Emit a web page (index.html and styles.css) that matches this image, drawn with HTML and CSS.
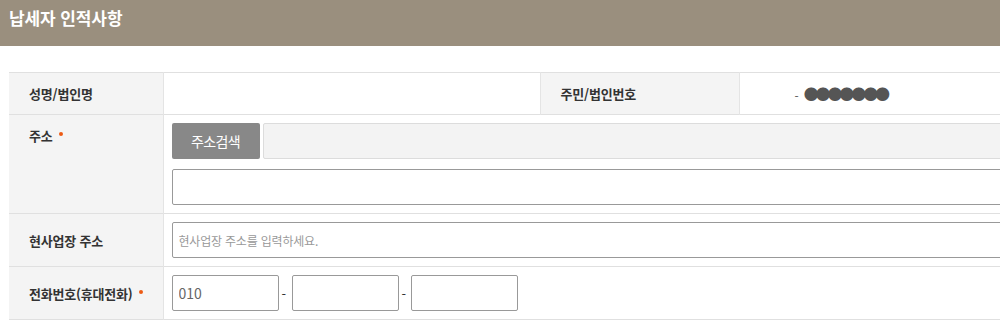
FILE: index.html
```html
<!DOCTYPE html>
<html lang="ko">
<head>
<meta charset="utf-8">
<title>납세자 인적사항</title>
<link rel="stylesheet" href="styles.css">
</head>
<body>
<header class="page-head">
  <h1 class="page-title">납세자 인적사항</h1>
</header>
<section class="form-wrap">
  <table class="info-table">
    <colgroup>
      <col class="c-label">
      <col class="c-value">
      <col class="c-label2">
      <col class="c-value2">
    </colgroup>
    <tbody>
      <tr>
        <th class="lbl">성명/법인명</th>
        <td class="val"></td>
        <th class="lbl lbl-mid">주민/법인번호</th>
        <td class="val rrn"><span class="dash">-</span><span class="mask">●●●●●●●</span></td>
      </tr>
      <tr>
        <th class="lbl lbl-top">주소<span class="req"></span></th>
        <td class="val" colspan="3">
          <div class="addr-line">
            <button class="btn-search" type="button">주소검색</button>
            <input class="inp inp-ro" type="text" readonly>
          </div>
          <input class="inp inp-full" type="text">
        </td>
      </tr>
      <tr>
        <th class="lbl">현사업장 주소</th>
        <td class="val" colspan="3">
          <input class="inp inp-full" type="text" placeholder="현사업장 주소를 입력하세요.">
        </td>
      </tr>
      <tr>
        <th class="lbl">전화번호(휴대전화)<span class="req"></span></th>
        <td class="val" colspan="3">
          <div class="phone">
            <input class="inp inp-tel" type="text" value="010">
            <span class="sep">-</span>
            <input class="inp inp-tel" type="text">
            <span class="sep">-</span>
            <input class="inp inp-tel" type="text">
          </div>
        </td>
      </tr>
    </tbody>
  </table>
</section>
</body>
</html>
```

FILE: styles.css
```css
html, body {
  margin: 0;
  padding: 0;
  overflow: hidden;
  background: #fff;
}
body {
  font-family: "Noto Sans CJK KR", "Noto Sans", sans-serif;
  color: #333;
  width: 1000px;
}
.page-head {
  background: #9a8f7e;
  height: 46px;
  padding: 0 9px;
  box-sizing: border-box;
}
.page-title {
  margin: 0;
  padding-top: 6px;
  font-size: 17px;
  line-height: 24px;
  font-weight: 700;
  color: #fff;
  letter-spacing: -0.1px;
}
.form-wrap {
  padding: 26px 0 0 9px;
}
.info-table {
  width: 1080px;
  border-collapse: collapse;
  table-layout: fixed;
  border-top: 1px solid #e0e0e0;
}
.c-label { width: 154px; }
.c-value { width: 377px; }
.c-label2 { width: 199px; }
.c-value2 { width: 350px; }
.info-table tr {
  border-bottom: 1px solid #e0e0e0;
}
.lbl {
  background: #f4f4f4;
  text-align: left;
  font-weight: 700;
  font-size: 13px;
  line-height: 17px;
  letter-spacing: -0.2px;
  color: #333;
  padding: 12px 0 12px 20px;
  vertical-align: middle;
  border-right: 1px solid #e4e4e4;
  white-space: nowrap;
}
.lbl-mid {
  border-left: 1px solid #e4e4e4;
}
.lbl-top {
  vertical-align: top;
  padding-top: 12px;
}
.req {
  display: inline-block;
  width: 4px;
  height: 4px;
  border-radius: 50%;
  background: #ec5a14;
  margin-left: 6px;
  vertical-align: 5px;
}
.val {
  padding: 8px 8px;
  vertical-align: top;
  font-size: 13px;
}
.rrn {
  padding: 0 0 0 55px;
  vertical-align: middle;
  color: #555;
  white-space: nowrap;
}
.rrn .dash {
  font-size: 12px;
  margin-right: 5px;
}
.rrn .mask {
  font-family: "Noto Sans CJK KR", sans-serif;
  font-size: 15px;
  letter-spacing: -3.1px;
  color: #555;
}
.addr-line {
  display: flex;
  gap: 3px;
  margin-bottom: 10px;
}
.btn-search {
  flex: 0 0 88px;
  height: 36px;
  border: 0;
  border-radius: 2px;
  background: #888;
  color: #fff;
  font-family: inherit;
  font-size: 14px;
  letter-spacing: -0.6px;
  padding: 0;
}
.inp {
  box-sizing: border-box;
  height: 36px;
  border: 1px solid #999;
  border-radius: 2px;
  background: #fff;
  font-family: inherit;
  font-size: 14px;
  color: #666;
  padding: 0 6px;
  margin: 0;
  display: block;
}
.inp::placeholder {
  color: #999;
  font-size: 12px;
  letter-spacing: -0.2px;
}
.inp-ro {
  flex: 1;
  background: #f3f3f3;
  border-color: #dcdcdc;
}
.inp-full {
  width: 100%;
}
.phone {
  display: flex;
  align-items: center;
}
.inp-tel {
  width: 107px;
}
.sep {
  width: 13px;
  padding-left: 3px;
  box-sizing: border-box;
  font-size: 13px;
  color: #333;
}
.sep + .inp-tel + .sep {
  width: 12px;
}
```
